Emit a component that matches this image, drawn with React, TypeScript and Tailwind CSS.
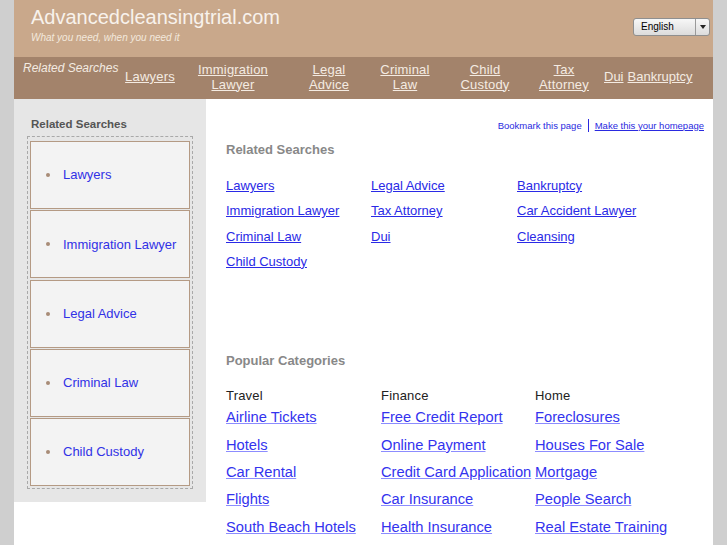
import React from 'react'

const navLinks: { lines: string[]; w: string }[] = [
  { lines: ['Lawyers'], w: 'w-[66px]' },
  { lines: ['Immigration', 'Lawyer'], w: 'w-[100px]' },
  { lines: ['Legal', 'Advice'], w: 'w-[92px]' },
  { lines: ['Criminal', 'Law'], w: 'w-[60px]' },
  { lines: ['Child', 'Custody'], w: 'w-[100px]' },
  { lines: ['Tax', 'Attorney'], w: 'w-[58px]' },
]

const sideLinks = ['Lawyers', 'Immigration Lawyer', 'Legal Advice', 'Criminal Law', 'Child Custody']

const related = [
  ['Lawyers', 'Legal Advice', 'Bankruptcy'],
  ['Immigration Lawyer', 'Tax Attorney', 'Car Accident Lawyer'],
  ['Criminal Law', 'Dui', 'Cleansing'],
  ['Child Custody'],
]

const categories = [
  { title: 'Travel', w: 'w-[155px]', links: ['Airline Tickets', 'Hotels', 'Car Rental', 'Flights', 'South Beach Hotels'] },
  { title: 'Finance', w: 'w-[154px]', links: ['Free Credit Report', 'Online Payment', 'Credit Card Application', 'Car Insurance', 'Health Insurance'] },
  { title: 'Home', w: 'w-[170px]', links: ['Foreclosures', 'Houses For Sale', 'Mortgage', 'People Search', 'Real Estate Training'] },
]

export default function App() {
  return (
    <div className="h-[545px] overflow-hidden bg-[#cfcfcf] font-['Liberation_Sans',Arial,sans-serif]">
      <div className="ml-[14px] w-[699px] h-full bg-white flex flex-col">
        {/* Cabeçalho */}
        <div className="h-[57px] bg-[#c9a88b] flex justify-between">
          <div className="pl-[17px] pt-[5px]">
            <div className="text-[20px] leading-[24px] text-[#f8f2ec]">Advancedcleansingtrial.com</div>
            <div className="mt-[3px] text-[10px] leading-[12px] italic text-[#f3e8dd]">What you need, when you need it</div>
          </div>
          <div className="pt-[18px] pr-[3px]">
            <div className="w-[77px] h-[18px] flex rounded-[3px] border border-[#8f8f8f] bg-gradient-to-b from-[#f7f7f7] to-[#dcdcdc]">
              <div className="flex-1 pl-[7px] text-[10px] leading-[16px] text-black">English</div>
              <div className="w-[14px] border-l border-[#9a9a9a] flex items-center justify-center">
                <div className="w-0 h-0 border-l-[3.5px] border-r-[3.5px] border-t-[4px] border-l-transparent border-r-transparent border-t-[#222]" />
              </div>
            </div>
          </div>
        </div>

        {/* Barra de navegação */}
        <div className="h-[42px] bg-[#a3836b] flex items-center pl-[9px] pb-[3px] text-[13px] leading-[15px] text-[#f4ebe2]">
          <div className="self-start pt-[4px] w-[94px] whitespace-nowrap text-[12px] italic">Related Searches</div>
          {navLinks.map((l) => (
            <div key={l.lines.join()} className={`${l.w} text-center`}>
              <a href="#" className="underline tracking-[0.2px]">
                {l.lines.map((t, i) => (
                  <React.Fragment key={t}>
                    {i > 0 && <br />}
                    {t}
                  </React.Fragment>
                ))}
              </a>
            </div>
          ))}
          <a href="#" className="ml-[11px] underline">Dui</a>
          <a href="#" className="ml-[4px] underline">Bankruptcy</a>
        </div>

        <div className="flex flex-1">
          {/* Barra lateral */}
          <div className="w-[192px] self-start bg-[#e6e6e6] pt-[18px] pb-[13px]">
            <div className="pl-[17px] text-[11.5px] leading-[14px] font-bold text-[#555]">Related Searches</div>
            <div className="ml-[13px] mt-[5px] w-[166px] border border-dashed border-[#a9a9a9] px-[2px] pt-[4px] pb-[2px] flex flex-col gap-[1.25px]">
              {sideLinks.map((s) => (
                <div key={s} className="h-[68px] border border-[#b49a84] bg-[#f3f3f3] flex items-center pl-[15px]">
                  <span className="w-[4px] h-[4px] rounded-full bg-[#a88c77]" />
                  <a href="#" className="ml-[13px] text-[13px] text-[#3131e6]">{s}</a>
                </div>
              ))}
            </div>
          </div>

          {/* Conteúdo principal */}
          <div className="flex-1 pl-[20px]">
            <div className="pt-[20px] pr-[9px] flex justify-end items-center text-[9.5px] leading-[12px] text-[#2a2ae0]">
              <a href="#">Bookmark this page</a>
              <span className="mx-[6px] h-[13px] border-l border-[#2a2ae0]" />
              <a href="#" className="underline">Make this your homepage</a>
            </div>

            <div className="mt-[10px] text-[13px] leading-[16px] font-bold text-[#888]">Related Searches</div>
            <div className="mt-[15px] grid grid-cols-[145px_146px_150px] text-[13px] leading-[25.3px]">
              {related.flat().map((t) => (
                <a key={t} href="#" className="underline text-[#2a2ae6]">{t}</a>
              ))}
            </div>

            <div className="mt-[79px] text-[13px] leading-[16px] font-bold text-[#888]">Popular Categories</div>
            <div className="mt-[19px] flex">
              {categories.map((c) => (
                <div key={c.title} className={c.w}>
                  <div className="text-[13px] leading-[16px] text-[#222] tracking-[0.2px]">{c.title}</div>
                  {c.links.map((l, i) => (
                    <div key={l} className={`h-[27.4px] leading-[27.4px] ${i === 0 ? '-mt-[1px]' : ''}`}>
                      <a href="#" className="text-[14.7px] text-[#3333ee] underline decoration-[#8c8cff] whitespace-nowrap">{l}</a>
                    </div>
                  ))}
                </div>
              ))}
            </div>
          </div>
        </div>
      </div>
    </div>
  )
}
